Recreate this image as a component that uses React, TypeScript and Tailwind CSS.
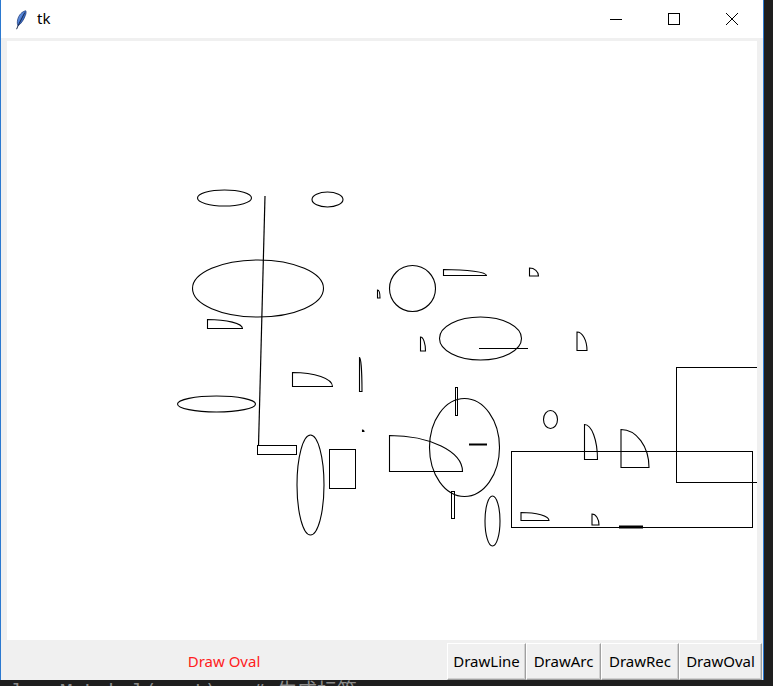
import React from "react";

const ovals: [number, number, number, number][] = [
  [224.5, 198, 27, 8],
  [327.5, 199.5, 15.5, 7.5],
  [258, 288.5, 65.5, 28.5],
  [216.5, 404, 39, 8],
  [310.5, 485, 13.5, 50],
  [412.5, 288.5, 23, 23],
  [480.5, 338.5, 41, 21.5],
  [464.5, 447.5, 35, 49],
  [492.5, 521, 7.5, 25],
  [550.5, 419.5, 7, 9],
];

const arcs: [number, number, number, number][] = [
  [207.5, 328.5, 35, 9],
  [292.5, 386.5, 40, 14],
  [443.5, 275.5, 43, 6],
  [529.5, 276, 9, 8],
  [377.5, 298, 2.5, 8],
  [420.5, 351, 5, 14],
  [577, 350.5, 10, 18.5],
  [359.5, 391.5, 2.5, 34],
  [389.5, 471.5, 73, 36],
  [584.5, 459.5, 13, 35],
  [621, 467.5, 28, 38],
  [521, 520.5, 28, 8],
  [592, 525, 7, 11],
  [362.5, 431.5, 1.5, 1.5],
];

const rects: [number, number, number, number][] = [
  [257.5, 445.5, 39, 9],
  [329.5, 449.5, 26, 39],
  [451.5, 491.5, 3, 27],
  [455.5, 387.5, 2, 28],
  [511.5, 451.5, 241, 76],
  [676.5, 367.5, 100, 115],
];

const lines: [number, number, number, number, number][] = [
  [265, 196, 258.5, 446, 1.2],
  [479, 348.5, 528, 348.5, 1],
  [469, 444.5, 487, 444.5, 2],
  [619, 527, 643, 527, 3],
];

function Feather() {
  return (
    <svg width="12" height="20" viewBox="0 0 12 20">
      <defs>
        <linearGradient id="fg" x1="0" y1="0" x2="1" y2="1">
          <stop offset="0" stopColor="#a9c8f2" />
          <stop offset="0.5" stopColor="#3f74d4" />
          <stop offset="1" stopColor="#1d3f8a" />
        </linearGradient>
      </defs>
      <path
        d="M10.8 0.8 C 7.2 1.4 3.6 5 2.6 10 C 2.1 12.5 2.3 14.5 3 15.8 C 6 14 8.8 9.8 10.3 5.5 C 11.1 3.5 11.3 1.8 10.8 0.8 Z"
        fill="url(#fg)"
        stroke="#23407e"
        strokeWidth="0.8"
      />
      <path d="M9.8 2.5 L 3 15.8 L 1.6 19.2" stroke="#1b2a4a" strokeWidth="1" fill="none" />
    </svg>
  );
}

function Btn({ label, w }: { label: string; w: string }) {
  return (
    <div
      className={`${w} h-[37px] flex items-center justify-center bg-[#f0f0f0] border-t border-l border-t-white border-l-white border-r border-b border-r-[#a0a0a0] border-b-[#a0a0a0] shadow-[inset_-1px_-1px_0_#d0d0d0] text-[15px] text-black leading-none`}
      style={{ fontFamily: '"Noto Sans", "Open Sans", sans-serif' }}
    >
      {label}
    </div>
  );
}

export default function App() {
  return (
    <div className="w-[773px] h-[686px] bg-[#1e1e1e] relative overflow-hidden">
      <div className="w-[764px] h-[680px] flex flex-col border-l border-r border-[#2b79d0] bg-[#f0f0f0]">
        {/* title bar */}
        <div className="h-[38px] bg-white flex items-center relative shrink-0">
          <div className="ml-[14px] mt-[1px]">
            <Feather />
          </div>
          <span
            className="ml-[10px] text-[15px] text-black leading-none mb-[1px]"
            style={{ fontFamily: '"Noto Sans", "Open Sans", sans-serif' }}
          >
            tk
          </span>
          <div className="ml-auto flex items-center h-full mr-[2px]">
            <div className="w-[58px] h-full flex items-center justify-center">
              <div className="w-[12px] h-[1px] bg-black" />
            </div>
            <div className="w-[58px] h-full flex items-center justify-center">
              <div className="w-[12px] h-[12px] border border-black" />
            </div>
            <div className="w-[58px] h-full flex items-center justify-center">
              <svg width="14" height="14" viewBox="0 0 14 14">
                <path d="M1 1 L13 13 M13 1 L1 13" stroke="#000" strokeWidth="1" />
              </svg>
            </div>
          </div>
        </div>
        {/* canvas */}
        <div className="pt-[3px] pl-[6px] shrink-0">
          <div className="w-[750px] h-[599px] bg-white">
            <svg width="750" height="599" viewBox="7 41 750 599" className="block">
              <g fill="none" stroke="#000">
                {ovals.map(([cx, cy, rx, ry], i) => (
                  <ellipse key={"o" + i} cx={cx} cy={cy} rx={rx} ry={ry} strokeWidth="1.1" />
                ))}
                {arcs.map(([cx, cy, rx, ry], i) => (
                  <path
                    key={"a" + i}
                    strokeWidth="1.1"
                    d={`M${cx} ${cy} L${cx} ${cy - ry} A${rx} ${ry} 0 0 1 ${cx + rx} ${cy} Z`}
                  />
                ))}
                {rects.map(([x, y, w, h], i) => (
                  <rect
                    key={"r" + i}
                    x={x}
                    y={y}
                    width={w}
                    height={h}
                    strokeWidth="1"
                    shapeRendering="crispEdges"
                  />
                ))}
                {lines.map(([x1, y1, x2, y2, sw], i) => (
                  <line key={"l" + i} x1={x1} y1={y1} x2={x2} y2={y2} strokeWidth={sw} />
                ))}
              </g>
            </svg>
          </div>
        </div>
        {/* bottom bar */}
        <div className="flex-1 flex items-end pr-[1px]">
          <div className="flex-1 h-full flex items-center justify-center pt-[3px]">
            <span
              className="text-[15px] text-[#ff2020] leading-none"
              style={{ fontFamily: '"Noto Sans", "Open Sans", sans-serif' }}
            >
              Draw Oval
            </span>
          </div>
          <Btn label="DrawLine" w="w-[79px]" />
          <Btn label="DrawArc" w="w-[75px]" />
          <Btn label="DrawRec" w="w-[78px]" />
          <Btn label="DrawOval" w="w-[83px]" />
        </div>
      </div>
      {/* code editor text behind */}
      <div className="h-[6px] overflow-hidden">
        <div
          className="mt-[1px] text-[20px] leading-[20px] text-[#8a8a8a] whitespace-pre"
          style={{ fontFamily: '"DejaVu Sans Mono", "Noto Sans CJK SC", monospace' }}
        >
          {"el = MyLabel(root)   # 生成标签"}
        </div>
      </div>
    </div>
  );
}
